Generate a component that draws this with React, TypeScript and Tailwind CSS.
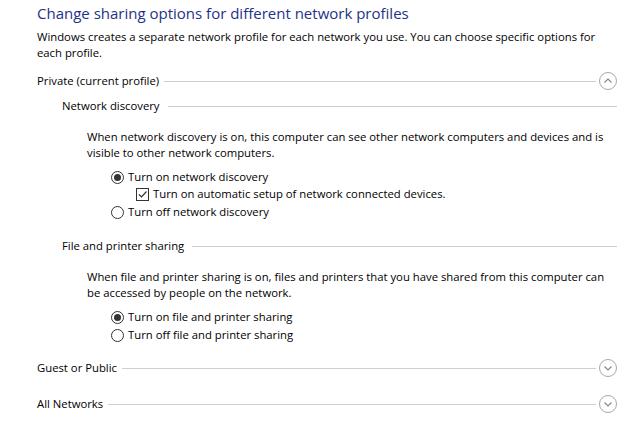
import React from "react";

const font = { fontFamily: '"Open Sans", "Noto Sans", sans-serif' };

function Circle({ up }: { up?: boolean }) {
  return (
    <svg width="20" height="20" viewBox="0 0 20 20" className="shrink-0">
      <circle cx="10" cy="10" r="8.5" fill="none" stroke="#a8a8a8" strokeWidth="1" />
      {up ? (
        <path d="M6.5 11.5 L10 8 L13.5 11.5" fill="none" stroke="#888" strokeWidth="1.2" />
      ) : (
        <path d="M6.5 8.5 L10 12 L13.5 8.5" fill="none" stroke="#888" strokeWidth="1.2" />
      )}
    </svg>
  );
}

function SectionHeader({ label, up, className }: { label: string; up?: boolean; className?: string }) {
  return (
    <div className={"flex items-center h-[20px] pl-[37px] pr-[10px] " + (className ?? "")}>
      <span className="whitespace-nowrap">{label}</span>
      <div className="flex-1 h-px bg-[#cfcfcf] ml-[5px] mr-[2px]" />
      <Circle up={up} />
    </div>
  );
}

function SubHeader({ label, className }: { label: string; className?: string }) {
  return (
    <div className={"flex items-center h-[20px] pl-[62px] pr-[11px] " + (className ?? "")}>
      <span className="whitespace-nowrap">{label}</span>
      <div className="flex-1 h-px bg-[#cfcfcf] ml-[8px]" />
    </div>
  );
}

function Radio({ checked, label, className }: { checked?: boolean; label: string; className?: string }) {
  return (
    <div className={"flex items-center h-[18px] pl-[111px] " + (className ?? "")}>
      <span className="w-[13px] h-[13px] rounded-full border border-[#333] flex items-center justify-center shrink-0">
        {checked && <span className="w-[7px] h-[7px] rounded-full bg-[#333]" />}
      </span>
      <span className="ml-[4px] whitespace-nowrap">{label}</span>
    </div>
  );
}

function Check({ label, className }: { label: string; className?: string }) {
  return (
    <div className={"flex items-center h-[17px] pl-[136px] " + (className ?? "")}>
      <span className="w-[13px] h-[13px] border border-[#333] flex items-center justify-center shrink-0 bg-white">
        <svg width="11" height="11" viewBox="0 0 11 11">
          <path d="M2 5.5 L4.5 8 L9.5 2.5" fill="none" stroke="#333" strokeWidth="1.2" />
        </svg>
      </span>
      <span className="ml-[4px] whitespace-nowrap">{label}</span>
    </div>
  );
}

export default function App() {
  return (
    <div className="w-[628px] h-[432px] bg-white text-[11.3px] text-black overflow-hidden" style={font}>
      <div className="h-[26px] flex items-center pl-[37px] text-[15px] text-[#1e3287] whitespace-nowrap">
        Change sharing options for different network profiles
      </div>
      <div className="mt-[3px] pl-[37px] leading-[16px] whitespace-nowrap">
        <div>Windows creates a separate network profile for each network you use. You can choose specific options for</div>
        <div>each profile.</div>
      </div>
      <SectionHeader label="Private (current profile)" up className="mt-[10px]" />
      <SubHeader label="Network discovery" className="mt-[5px]" />
      <div className="mt-[13px] pl-[87px] leading-[16px] whitespace-nowrap">
        <div>When network discovery is on, this computer can see other network computers and devices and is</div>
        <div>visible to other network computers.</div>
      </div>
      <Radio checked label="Turn on network discovery" className="mt-[7px]" />
      <Check label="Turn on automatic setup of network connected devices." />
      <Radio label="Turn off network discovery" />
      <SubHeader label="File and printer sharing" className="mt-[15px]" />
      <div className="mt-[13px] pl-[87px] leading-[16px] whitespace-nowrap">
        <div>When file and printer sharing is on, files and printers that you have shared from this computer can</div>
        <div>be accessed by people on the network.</div>
      </div>
      <Radio checked label="Turn on file and printer sharing" className="mt-[7px]" />
      <Radio label="Turn off file and printer sharing" />
      <SectionHeader label="Guest or Public" className="mt-[14px]" />
      <SectionHeader label="All Networks" className="mt-[16px]" />
    </div>
  );
}
